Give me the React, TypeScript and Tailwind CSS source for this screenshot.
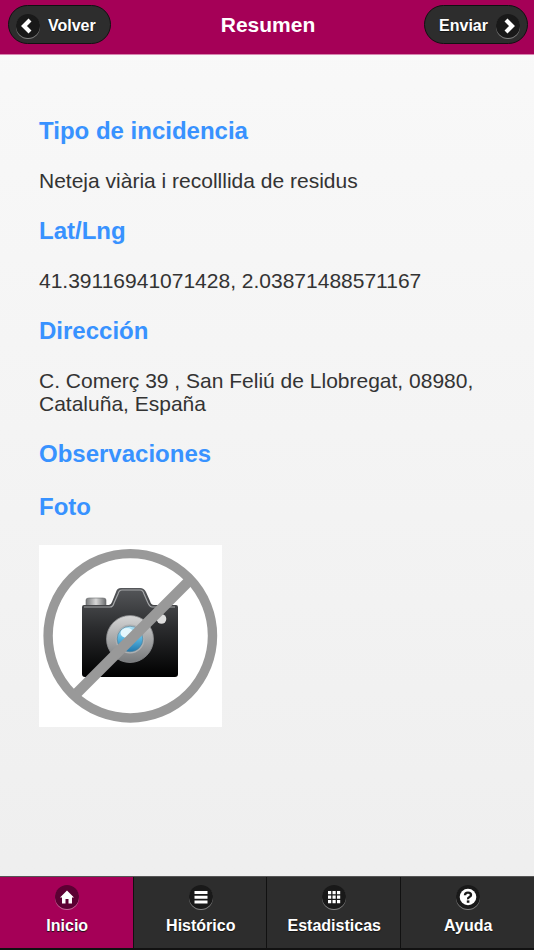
import type { ReactNode } from 'react'

interface SectionProps {
    title: string;
    text?: string;
    children?: ReactNode;
}

const Disc = ({ children, active }: { children: ReactNode; active?: boolean }) => (
    <span
        className={`flex size-6 shrink-0 rounded-full shadow-[0_1px_0_rgba(255,255,255,0.4)] ${active ? 'bg-[#5c0033]' : 'bg-[#191919]'}`}
    >
        <svg viewBox="0 0 24 24" className="size-6" fill="#fff" aria-hidden="true">
            {children}
        </svg>
    </span>
)

const Section = ({ title, text, children }: SectionProps) => (
    <section className="flex flex-col gap-6">
        <h2 className="text-2xl leading-7 font-bold text-[#3892ff]">{title}</h2>
        {text && <p className="text-[21px] leading-[23px]">{text}</p>}
        {children}
    </section>
)

const NoPhoto = () => (
    <svg viewBox="0 0 183 182" className="h-[182px] w-[183px] bg-white" role="img" aria-label="Sin foto">
        <defs>
            <linearGradient id="body" x1="0" y1="0" x2="0" y2="1">
                <stop offset="0" stopColor="#55575a" />
                <stop offset="0.45" stopColor="#2b2c2e" />
                <stop offset="1" stopColor="#000" />
            </linearGradient>
            <linearGradient id="knob" x1="0" y1="0" x2="1" y2="0">
                <stop offset="0" stopColor="#77797b" />
                <stop offset="0.5" stopColor="#d8d8d8" />
                <stop offset="1" stopColor="#696b6d" />
            </linearGradient>
            <linearGradient id="ring" x1="0" y1="0" x2="0" y2="1">
                <stop offset="0" stopColor="#d6d6d6" />
                <stop offset="1" stopColor="#77797b" />
            </linearGradient>
            <linearGradient id="glass" x1="0" y1="0" x2="0" y2="1">
                <stop offset="0" stopColor="#b4e4f7" />
                <stop offset="0.45" stopColor="#5cb8e2" />
                <stop offset="1" stopColor="#2077ae" />
            </linearGradient>
        </defs>
        <path d="M47 61V55q0-2 3-2h14q3 0 3 2v6z" fill="url(#knob)" stroke="#66686a" strokeWidth="0.6" />
        <path
            d="M45 60H70q2 0 3-3l4-10q1-4 5-4h19q4 0 6 4l4 9q1 4 4 4h22q2 0 2 2v67q0 3-3 3H46q-3 0-3-3V62q0-2 2-2z"
            fill="url(#body)"
        />
        <path
            d="M45 62H71q3 0 4-4l4-9q1-4 4-4h18q3 0 4 4l4 9q2 4 4 4h23"
            fill="none"
            stroke="#a4a6a8"
            strokeWidth="1.2"
        />
        <circle cx="91" cy="94" r="23.5" fill="url(#ring)" stroke="#8b8d8f" strokeWidth="0.8" />
        <circle cx="91" cy="94" r="14.5" fill="#aeb0b2" />
        <circle cx="91" cy="94" r="12.8" fill="url(#glass)" stroke="#517f96" strokeWidth="0.6" />
        <ellipse cx="88" cy="88" rx="6.5" ry="5" fill="#e4f7fd" />
        <circle cx="122.5" cy="74" r="4.8" fill="#dedede" />
        <path d="M150 36L37 149" stroke="#999" strokeWidth="10.4" />
        <circle cx="91.3" cy="90.8" r="82.2" fill="none" stroke="#999" strokeWidth="9.4" />
    </svg>
)

const navItems = [
    {
        label: 'Inicio',
        icon: <path d="M12 5.5L19 12.5H17V18.5H13.5V14H10.5V18.5H7V12.5H5z" />,
    },
    {
        label: 'Histórico',
        icon: <path d="M5.5 6h13v3h-13zM5.5 10.8h13v3h-13zM5.5 15.5h13v3h-13z" />,
    },
    {
        label: 'Estadisticas',
        icon: (
            <path d="M6 6h3.2v3.2H6zM10.5 6h3.2v3.2h-3.2zM15 6h3.2v3.2H15zM6 10.5h3.2v3.2H6zM10.5 10.5h3.2v3.2h-3.2zM15 10.5h3.2v3.2H15zM6 15h3.2v3.2H6zM10.5 15h3.2v3.2h-3.2zM15 15h3.2v3.2H15z" />
        ),
    },
    {
        label: 'Ayuda',
        icon: (
            <>
                <circle cx="12" cy="12" r="8.3" />
                <path d="M9 10.2Q9 7.6 12 7.6T15 10Q15 11.3 13.4 12T12.1 14.2" fill="none" stroke="#191919" strokeWidth="2.4" />
                <path d="M10.8 15.4h2.6v2.4h-2.6z" fill="#191919" />
            </>
        ),
    },
]

const App = () => {
    return (
        <div className="flex min-h-screen flex-col bg-linear-to-b from-[#f9f9f9] to-[#eee] font-['Liberation_Sans',Arial,sans-serif] text-[#333] text-shadow-[0_1px_0_#f3f3f3]">
            <header className="grid grid-cols-[1fr_auto_1fr] items-center border-b border-[#d684ae] bg-[#a50057] pt-[5px] pr-[6px] pb-[10px] pl-2 text-white text-shadow-none">
                <button
                    type="button"
                    className="flex h-[39px] items-center gap-2 justify-self-start rounded-full border border-[#111] bg-[#2d2d2d] pt-0.5 pr-[14px] pl-[7px] font-bold text-shadow-[0_1px_1px_#111]"
                >
                    <Disc>
                        <path d="M14 6L8 12L14 18" fill="none" stroke="#fff" strokeWidth="4.2" />
                    </Disc>
                    Volver
                </button>
                <h1 className="text-[21px] leading-6 font-bold">Resumen</h1>
                <button
                    type="button"
                    className="flex h-[39px] items-center gap-2 justify-self-end rounded-full border border-[#111] bg-[#2d2d2d] pt-0.5 pr-[7px] pl-[14px] font-bold text-shadow-[0_1px_1px_#111]"
                >
                    Enviar
                    <Disc>
                        <path d="M10 6L16 12L10 18" fill="none" stroke="#fff" strokeWidth="4.2" />
                    </Disc>
                </button>
            </header>

            <main className="flex flex-1 flex-col gap-[25px] px-[39px] pt-[62px] pb-10">
                <Section title="Tipo de incidencia" text="Neteja viària i recolllida de residus" />
                <Section title="Lat/Lng" text="41.39116941071428, 2.03871488571167" />
                <Section title="Dirección" text="C. Comerç 39 , San Feliú de Llobregat, 08980, Cataluña, España" />
                <Section title="Observaciones" />
                <Section title="Foto">
                    <NoPhoto />
                </Section>
            </main>

            <nav className="grid grid-cols-4 border-t border-b-2 border-t-[#555] border-b-[#111] bg-[#2d2d2d]">
                {navItems.map((item, i) => (
                    <a
                        key={item.label}
                        href="#"
                        className={`flex flex-col items-center gap-[5px] pt-2 pb-[10px] pl-0.5 leading-6 font-bold text-white text-shadow-[0_1px_1px_#111] ${i < 3 ? 'border-r border-[#111]' : ''} ${i === 0 ? 'bg-[#a50057]' : ''}`}
                    >
                        <Disc active={i === 0}>{item.icon}</Disc>
                        {item.label}
                    </a>
                ))}
            </nav>
        </div>
    )
}

export default App
